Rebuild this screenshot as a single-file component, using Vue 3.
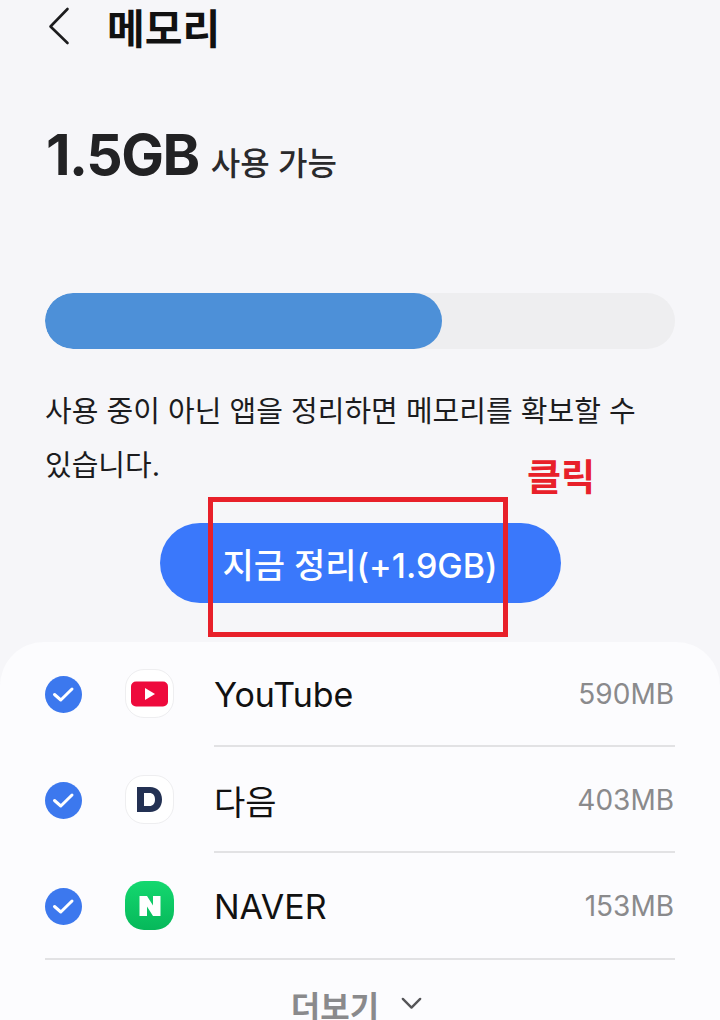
<script setup>
const apps = [
  { name: 'YouTube', size: '590MB', icon: 'yt' },
  { name: '다음', size: '403MB', icon: 'daum' },
  { name: 'NAVER', size: '153MB', icon: 'naver' },
]
</script>

<template>
  <div class="page">
    <header class="top">
      <svg class="back" width="24" height="40" viewBox="0 0 24 40" fill="none">
        <path d="M20.5 3 3.5 20.5 20.5 37" stroke="#1c1c1e" stroke-width="2.6" stroke-linecap="round" stroke-linejoin="round" />
      </svg>
      <h1 class="title">메모리</h1>
    </header>

    <div class="avail">
      <span class="big">1.5GB</span>
      <span class="small">사용 가능</span>
    </div>

    <div class="track"><div class="fill"></div></div>

    <p class="desc">사용 중이 아닌 앱을 정리하면 메모리를 확보할 수<br />있습니다.</p>

    <div class="btn-wrap">
      <button class="clean">지금 정리(+1.9GB)</button>
      <div class="mark"></div>
      <span class="mark-label">클릭</span>
    </div>

    <section class="sheet">
      <div v-for="(a, i) in apps" :key="a.name" class="row">
        <svg class="check" width="37" height="37" viewBox="0 0 37 37">
          <circle cx="18.5" cy="18.5" r="18.5" fill="#3c78ee" />
          <path d="M9.5 18.5 15.8 24 27 13" fill="none" stroke="#fff" stroke-width="3" stroke-linecap="round" stroke-linejoin="round" />
        </svg>
        <div class="icon" :class="'icon-' + a.icon">
          <svg v-if="a.icon === 'yt'" width="37" height="26" viewBox="0 0 37 26">
            <rect width="37" height="25" y="0.5" rx="5" fill="#ee0a3c" />
            <path d="M14 7 14 19 24 13Z" fill="#fff" />
          </svg>
          <svg v-else-if="a.icon === 'daum'" width="27" height="27" viewBox="0 0 27 27">
            <path fill-rule="evenodd" d="M1 1H14C21.5 1 26 6 26 13.5S21.5 26 14 26H1ZM8 7V20H13.5C17 20 19 17.5 19 13.5S17 7 13.5 7Z" fill="#233153" />
          </svg>
          <svg v-else width="24" height="24" viewBox="0 0 24 24">
            <path d="M1.5 2H9L15 11.5V2H22.5V22H15L9 12.5V22H1.5Z" fill="#fff" />
          </svg>
        </div>
        <div class="info" :class="{ ruled: i < 2 }">
          <span class="name">{{ a.name }}</span>
          <span class="size">{{ a.size }}</span>
        </div>
      </div>
      <div class="rule"></div>
      <div class="more">
        <span>더보기</span>
        <svg width="21" height="13" viewBox="0 0 23 14" fill="none">
          <path d="M2 2 11.5 11.5 21 2" stroke="#555558" stroke-width="2.6" stroke-linecap="round" stroke-linejoin="round" />
        </svg>
      </div>
    </section>
  </div>
</template>

<style>
html, body { margin: 0; background: #f6f6f9; }
</style>

<style scoped>
.page {
  width: 720px;
  height: 1020px;
  overflow: hidden;
  background: #f6f6f9;
  font-family: Inter, "Noto Sans CJK KR", sans-serif;
  color: #1c1c1e;
  box-sizing: border-box;
}
.top {
  display: flex;
  align-items: center;
  height: 56px;
  padding-left: 47px;
  gap: 36px;
}
.back { flex: none; margin-top: -4px; }
.title {
  margin: 2px 0 0;
  font-size: 41px;
  line-height: 56px;
  font-weight: 700;
  color: #111;
}
.avail {
  display: flex;
  align-items: baseline;
  gap: 12px;
  margin-top: 59px;
  padding-left: 46px;
  height: 85px;
  line-height: 80px;
}
.big { font-size: 57px; font-weight: 700; letter-spacing: -1.5px; color: #222224; }
.small { font-size: 32px; font-weight: 500; color: #2a2a2c; }
.track {
  margin: 93px 45px 0;
  height: 56px;
  border-radius: 28px;
  background: #eeeef0;
  overflow: hidden;
}
.fill {
  width: 397px;
  height: 100%;
  border-radius: 28px;
  background: #4d90d8;
}
.desc {
  margin: 36px 45px 0;
  font-size: 29px;
  line-height: 54px;
  color: #1c1c1e;
  white-space: nowrap;
}
.btn-wrap {
  position: relative;
  display: flex;
  justify-content: center;
  margin-top: 30px;
}
.clean {
  width: 401px;
  height: 80px;
  border: 0;
  border-radius: 40px;
  background: #3a78fb;
  color: #fff;
  font: 500 34px Inter, "Noto Sans CJK KR", sans-serif;
  white-space: nowrap;
  padding: 0;
}
.mark {
  position: absolute;
  left: 208px;
  top: -26px;
  width: 300px;
  height: 140px;
  box-sizing: border-box;
  border: 5px solid #e8202a;
}
.mark-label {
  position: absolute;
  left: 527px;
  top: -70px;
  font-size: 37px;
  line-height: 50px;
  font-weight: 700;
  color: #e8202a;
}
.sheet {
  display: flow-root;
  margin-top: 39px;
  height: 400px;
  background: #fcfcfe;
  border-radius: 44px 44px 0 0;
  padding: 0 45px;
}
.row {
  display: flex;
  align-items: center;
  height: 106px;
}
.row:first-child { margin-top: -1px; }
.check { flex: none; margin-right: 44px; }
.icon {
  flex: none;
  width: 49px;
  height: 49px;
  margin: 0 40px 1px -1px;
  border-radius: 19px;
  box-sizing: border-box;
  display: flex;
  align-items: center;
  justify-content: center;
}
.icon-yt, .icon-daum { background: #fff; border: 1px solid #eeeef0; }
.icon-naver { background: linear-gradient(#14d86f, #06b85a); }
.info {
  flex: 1;
  height: 100%;
  display: flex;
  align-items: center;
  justify-content: space-between;
  box-sizing: border-box;
}
.ruled { box-shadow: inset 0 -2px 0 #e2e2e4; }
.name { font-size: 34px; font-weight: 400; color: #111; }
.size { font-size: 28px; color: #8a8a8c; padding-right: 1px; }
.rule { height: 2px; background: #e2e2e4; margin-top: -1px; }
.more {
  display: flex;
  align-items: center;
  justify-content: center;
  gap: 22px;
  height: 90px;
  padding-right: 7px;
  font-size: 32px;
  font-weight: 700;
  color: #8a8a8c;
}
.more svg { margin-top: -4px; }
</style>
